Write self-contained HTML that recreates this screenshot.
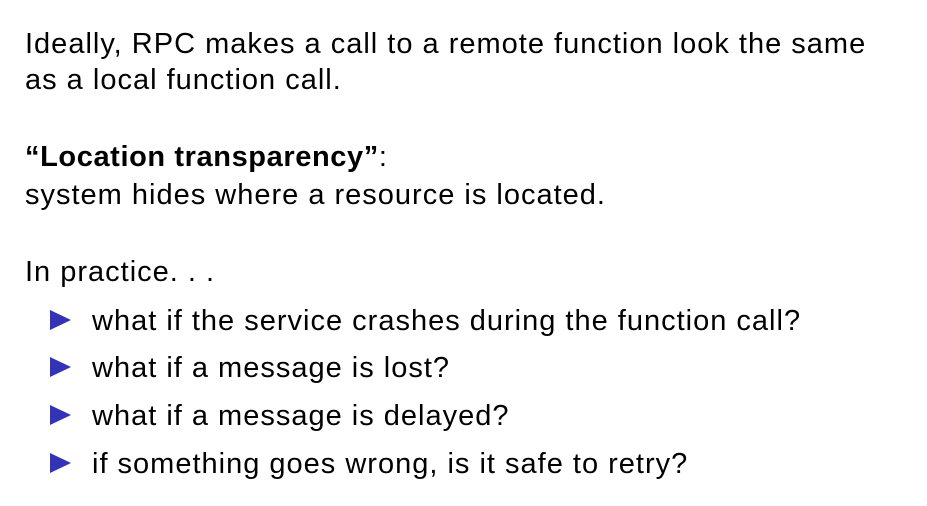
<!DOCTYPE html>
<html><head><meta charset="utf-8"><style>
html,body{margin:0;padding:0;background:#fff;}
body{width:927px;height:506px;position:relative;overflow:hidden;font-family:"Liberation Sans","DejaVu Sans",sans-serif;font-size:29px;letter-spacing:1px;color:#000;}
.l{position:absolute;left:25px;line-height:36px;white-space:nowrap;}
.b{left:92px;}
.t{position:absolute;left:50px;width:0;height:0;border-top:10px solid transparent;border-bottom:10px solid transparent;border-left:21px solid #3333b3;}
</style></head><body>
<div class="l" style="top:26px">Ideally, RPC makes a call to a remote function look the same</div>
<div class="l" style="top:62px">as a local function call.</div>
<div class="l" style="top:139px"><b style="letter-spacing:0.6px">“Location transparency”</b>:</div>
<div class="l" style="top:177px">system hides where a resource is located.</div>
<div class="l" style="top:254px">In practice. . .</div>
<div class="t" style="top:310px"></div><div class="l b" style="top:303px">what if the service crashes during the function call?</div>
<div class="t" style="top:357px"></div><div class="l b" style="top:350px">what if a message is lost?</div>
<div class="t" style="top:405px"></div><div class="l b" style="top:398px">what if a message is delayed?</div>
<div class="t" style="top:453px"></div><div class="l b" style="top:446px">if something goes wrong, is it safe to retry?</div>
</body></html>
